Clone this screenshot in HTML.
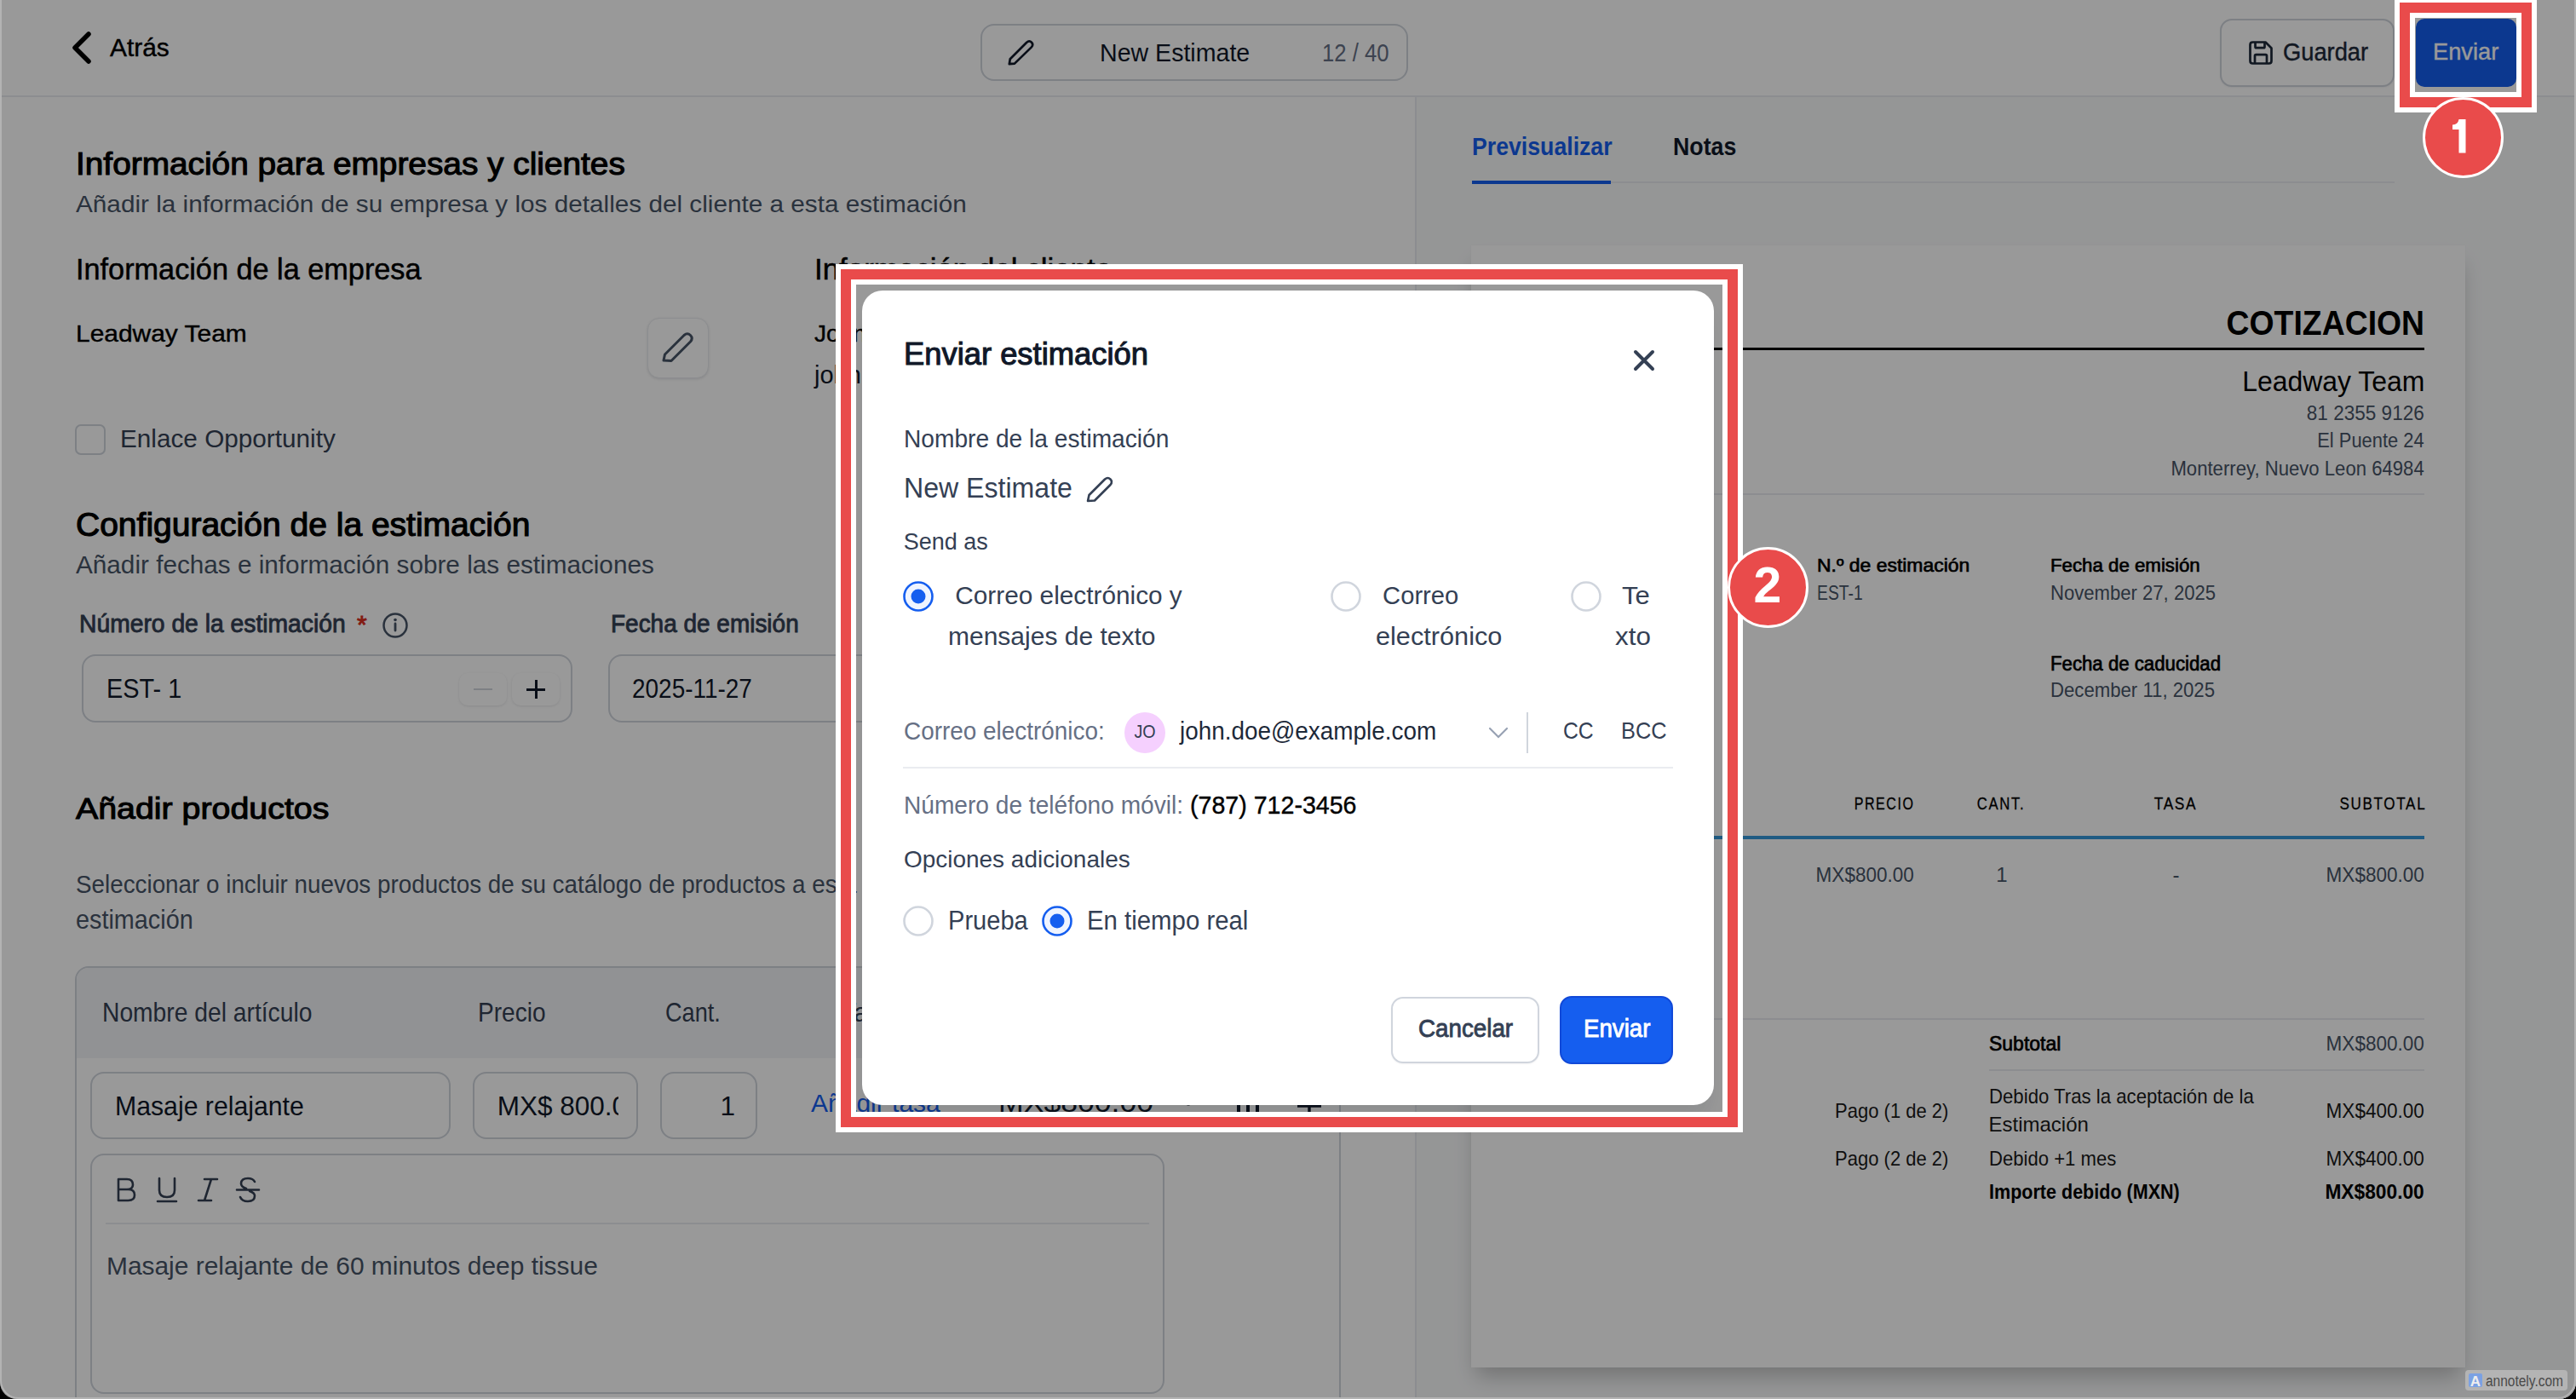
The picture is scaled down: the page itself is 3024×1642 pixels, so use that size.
<!DOCTYPE html>
<html><head><meta charset="utf-8"><style>
html,body{margin:0;padding:0;width:3024px;height:1642px;overflow:hidden;background:#000;}
body{position:relative;font-family:"Liberation Sans",sans-serif;}
#root{position:absolute;left:0;top:0;width:3024px;height:1642px;overflow:hidden;border-radius:0 0 20px 20px;}
.t{position:absolute;white-space:pre;}
.b{position:absolute;box-sizing:border-box;}
svg.b{overflow:visible;}
</style></head><body><div id="root">
<div class="b" style="left:0px;top:0px;width:3024px;height:1642px;background:#fff;"></div>
<div class="b" style="left:0px;top:112px;width:3024px;height:2px;background:#EAECF0;"></div>
<svg class="b" style="left:80px;top:32px;" width="32" height="48" viewBox="0 0 32 48"><polyline points="24,8 8,24 24,40" fill="none" stroke="#000" stroke-width="5.5" stroke-linecap="round" stroke-linejoin="round"/></svg>
<div id="t0" class="t" style="top:40.9px;font-size:29.5px;line-height:29.5px;font-weight:400;color:#000;-webkit-text-stroke:0.41px #000;left:129px;transform:scaleX(1.0136);transform-origin:left;">Atrás</div>
<div class="b" style="left:1151px;top:28px;width:502px;height:67px;border:2px solid #D0D5DD;border-radius:16px;box-sizing:border-box;"></div>
<svg class="b" style="left:1180px;top:44px;" width="36" height="36" viewBox="0 0 36 36"><path d="M4.8 31.2 L5.8 25.2 L25 6 Q28.3 3 31 5.7 Q33.6 8.4 30.6 11.6 L11 30.6 Z" fill="none" stroke="#101828" stroke-width="2.7" stroke-linejoin="round"/></svg>
<div id="t1" class="t" style="top:47.1px;font-size:29.5px;line-height:29.5px;font-weight:400;color:#101828;left:1290.5px;transform:scaleX(0.9683);transform-origin:left;">New Estimate</div>
<div id="t2" class="t" style="top:47.1px;font-size:29.5px;line-height:29.5px;font-weight:400;color:#667085;left:1552px;transform:scaleX(0.8706);transform-origin:left;">12 / 40</div>
<div class="b" style="left:2606px;top:22px;width:205px;height:80px;border:2px solid #D0D5DD;border-radius:14px;box-sizing:border-box;background:#fff;box-shadow:0 1px 2px rgba(16,24,40,.05);"></div>
<svg class="b" style="left:2638px;top:46px;" width="32" height="32" viewBox="0 0 32 32"><path d="M3.5 6.5 Q3.5 3.5 6.5 3.5 L21.5 3.5 L28.5 10.5 L28.5 25.5 Q28.5 28.5 25.5 28.5 L6.5 28.5 Q3.5 28.5 3.5 25.5 Z" fill="none" stroke="#1d2939" stroke-width="2.7" stroke-linejoin="round"/><path d="M9.5 3.5 L9.5 9 Q9.5 10.2 10.7 10.2 L19.3 10.2 Q20.5 10.2 20.5 9 L20.5 3.5" fill="none" stroke="#1d2939" stroke-width="2.7"/><path d="M9 28.5 L9 19.7 Q9 18.2 10.5 18.2 L21.5 18.2 Q23 18.2 23 19.7 L23 28.5" fill="none" stroke="#1d2939" stroke-width="2.7"/></svg>
<div id="t3" class="t" style="top:45.7px;font-size:30.0px;line-height:30.0px;font-weight:400;color:#1d2939;-webkit-text-stroke:0.42px #1d2939;left:2679.5px;transform:scaleX(0.9098);transform-origin:left;">Guardar</div>
<div class="b" style="left:2836px;top:22px;width:118px;height:80px;background:#155EEF;border-radius:10px;"></div>
<div id="t4" class="t" style="top:46.4px;font-size:28.5px;line-height:28.5px;font-weight:400;color:#fff;-webkit-text-stroke:0.40px #fff;left:2855.8px;transform:scaleX(0.9559);transform-origin:left;">Enviar</div>
<div class="b" style="left:1661px;top:114px;width:2px;height:1528px;background:#EAECF0;"></div>
<div id="t5" class="t" style="top:174.2px;font-size:37.0px;line-height:37.0px;font-weight:400;color:#000;-webkit-text-stroke:1.11px #000;left:89px;transform:scaleX(1.0487);transform-origin:left;">Información para empresas y clientes</div>
<div id="t6" class="t" style="top:225.6px;font-size:28.0px;line-height:28.0px;font-weight:400;color:#475467;left:89px;transform:scaleX(1.0615);transform-origin:left;">Añadir la información de su empresa y los detalles del cliente a esta estimación</div>
<div id="t7" class="t" style="top:298.2px;font-size:35.0px;line-height:35.0px;font-weight:400;color:#000;-webkit-text-stroke:0.49px #000;left:89px;transform:scaleX(0.9787);transform-origin:left;">Información de la empresa</div>
<div id="t8" class="t" style="top:298.2px;font-size:35.0px;line-height:35.0px;font-weight:400;color:#000;-webkit-text-stroke:0.49px #000;left:956px;transform:scaleX(0.9968);transform-origin:left;">Información del cliente</div>
<div id="t9" class="t" style="top:378.2px;font-size:28.0px;line-height:28.0px;font-weight:400;color:#000;-webkit-text-stroke:0.39px #000;left:89px;transform:scaleX(1.0690);transform-origin:left;">Leadway Team</div>
<div class="b" style="left:760px;top:373px;width:72px;height:71px;border:1px solid #EAECF0;border-radius:14px;background:#fff;box-shadow:0 1px 3px rgba(16,24,40,.12);box-sizing:border-box;"></div>
<svg class="b" style="left:776px;top:388px;" width="40" height="40" viewBox="0 0 40 40"><path d="M3 35 L4.5 28 L27 5.5 Q31 2 34.5 5.5 Q38 9 34.5 13 L12 35.5 Z" fill="none" stroke="#475467" stroke-width="3" stroke-linejoin="round"/></svg>
<div id="t10" class="t" style="top:378.2px;font-size:28.0px;line-height:28.0px;font-weight:400;color:#000;-webkit-text-stroke:0.39px #000;left:956px;">John Doe</div>
<div id="t11" class="t" style="top:426.4px;font-size:29.0px;line-height:29.0px;font-weight:400;color:#101828;left:956px;">john.doe@example.com</div>
<div class="b" style="left:88px;top:498px;width:36px;height:36px;border:2px solid #D0D5DD;border-radius:7px;box-sizing:border-box;background:#fff;"></div>
<div id="t12" class="t" style="top:500.2px;font-size:30.0px;line-height:30.0px;font-weight:400;color:#344054;left:141px;transform:scaleX(0.9907);transform-origin:left;">Enlace Opportunity</div>
<div id="t13" class="t" style="top:597.0px;font-size:38.0px;line-height:38.0px;font-weight:400;color:#000;-webkit-text-stroke:1.14px #000;left:89px;transform:scaleX(1.0264);transform-origin:left;">Configuración de la estimación</div>
<div id="t14" class="t" style="top:649.2px;font-size:29.0px;line-height:29.0px;font-weight:400;color:#475467;left:89px;transform:scaleX(1.0246);transform-origin:left;">Añadir fechas e información sobre las estimaciones</div>
<div id="t15" class="t" style="top:718.4px;font-size:29.0px;line-height:29.0px;font-weight:400;color:#344054;-webkit-text-stroke:0.87px #344054;left:93px;transform:scaleX(0.9748);transform-origin:left;">Número de la estimación</div>
<div id="t16" class="t" style="top:717.5px;font-size:30px;line-height:30px;font-weight:400;color:#D92D20;-webkit-text-stroke:0.90px #D92D20;left:419px;">*</div>
<svg class="b" style="left:447px;top:717px;" width="34" height="34" viewBox="0 0 34 34"><circle cx="17" cy="17" r="13.5" fill="none" stroke="#475467" stroke-width="2.5"/><line x1="17" y1="15" x2="17" y2="23" stroke="#475467" stroke-width="2.8" stroke-linecap="round"/><circle cx="17" cy="10.5" r="1.8" fill="#475467"/></svg>
<div id="t17" class="t" style="top:718.4px;font-size:29.0px;line-height:29.0px;font-weight:400;color:#344054;-webkit-text-stroke:0.87px #344054;left:717px;transform:scaleX(0.9641);transform-origin:left;">Fecha de emisión</div>
<div class="b" style="left:96px;top:768px;width:576px;height:80px;border:2px solid #D0D5DD;border-radius:16px;box-sizing:border-box;background:#fff;"></div>
<div id="t18" class="t" style="top:791.8px;font-size:32.0px;line-height:32.0px;font-weight:400;color:#101828;left:125px;transform:scaleX(0.9021);transform-origin:left;">EST- 1</div>
<div class="b" style="left:539px;top:790px;width:56px;height:38px;border-radius:10px;background:#fff;box-shadow:0 1px 3px rgba(16,24,40,.10);"></div>
<div class="b" style="left:556px;top:808px;width:22px;height:2px;background:#D0D5DD;"></div>
<div class="b" style="left:601px;top:790px;width:56px;height:38px;border-radius:10px;background:#fff;box-shadow:0 1px 3px rgba(16,24,40,.10);"></div>
<div class="b" style="left:618px;top:808px;width:22px;height:2.5px;background:#101828;"></div>
<div class="b" style="left:628px;top:798px;width:2.5px;height:22px;background:#101828;"></div>
<div class="b" style="left:714px;top:768px;width:686px;height:80px;border:2px solid #D0D5DD;border-radius:16px;box-sizing:border-box;background:#fff;"></div>
<div id="t19" class="t" style="top:791.8px;font-size:32.0px;line-height:32.0px;font-weight:400;color:#101828;left:741.8px;transform:scaleX(0.8733);transform-origin:left;">2025-11-27</div>
<div id="t20" class="t" style="top:931.2px;font-size:35.0px;line-height:35.0px;font-weight:400;color:#000;-webkit-text-stroke:1.05px #000;left:89px;transform:scaleX(1.1238);transform-origin:left;">Añadir productos</div>
<div id="t21" class="t" style="top:1023.1px;font-size:30.0px;line-height:30.0px;font-weight:400;color:#475467;left:89px;transform:scaleX(0.9270);transform-origin:left;">Seleccionar o incluir nuevos productos de su catálogo de productos a esta</div>
<div id="t22" class="t" style="top:1064.0px;font-size:30.5px;line-height:30.5px;font-weight:400;color:#475467;left:89px;transform:scaleX(0.9447);transform-origin:left;">estimación</div>
<div class="b" style="left:88px;top:1134px;width:1486px;height:548px;border:2px solid #D0D5DD;border-radius:16px;box-sizing:border-box;background:#fff;overflow:hidden;"></div>
<div class="b" style="left:90px;top:1136px;width:1482px;height:105.5px;background:#F2F4F7;border-radius:14px 14px 0 0;"></div>
<div id="t23" class="t" style="top:1172.7px;font-size:30.5px;line-height:30.5px;font-weight:400;color:#344054;left:120px;transform:scaleX(0.9257);transform-origin:left;">Nombre del artículo</div>
<div id="t24" class="t" style="top:1172.7px;font-size:30.5px;line-height:30.5px;font-weight:400;color:#344054;left:560.7px;transform:scaleX(0.9194);transform-origin:left;">Precio</div>
<div id="t25" class="t" style="top:1172.7px;font-size:30.5px;line-height:30.5px;font-weight:400;color:#344054;left:780.8px;transform:scaleX(0.8892);transform-origin:left;">Cant.</div>
<div id="t26" class="t" style="top:1172.7px;font-size:30.5px;line-height:30.5px;font-weight:400;color:#344054;left:987px;">Tasa</div>
<div class="b" style="left:106px;top:1258px;width:423px;height:79px;border:2px solid #D0D5DD;border-radius:16px;box-sizing:border-box;background:#fff;"></div>
<div id="t27" class="t" style="top:1282.8px;font-size:31.5px;line-height:31.5px;font-weight:400;color:#101828;left:134.8px;transform:scaleX(0.9596);transform-origin:left;">Masaje relajante</div>
<div class="b" style="left:555px;top:1258px;width:194px;height:79px;border:2px solid #D0D5DD;border-radius:16px;box-sizing:border-box;background:#fff;overflow:hidden;"></div>
<div class="b" style="left:583px;top:1270px;width:143px;height:60px;overflow:hidden;"><div class="t" style="left:0.7px;top:12.8px;font-size:31.5px;line-height:31.5px;color:#101828;">MX$ 800.00</div></div>
<div class="b" style="left:775px;top:1258px;width:114px;height:79px;border:2px solid #D0D5DD;border-radius:16px;box-sizing:border-box;background:#fff;"></div>
<div id="t28" class="t" style="top:1282.8px;font-size:31.5px;line-height:31.5px;font-weight:400;color:#101828;right:2161px;">1</div>
<div id="t29" class="t" style="top:1280.3px;font-size:30.0px;line-height:30.0px;font-weight:400;color:#155EEF;left:952px;">Añadir tasa</div>
<div id="t30" class="t" style="top:1279.0px;font-size:31.5px;line-height:31.5px;font-weight:400;color:#101828;left:1172px;transform:scaleX(1.1304);transform-origin:left;">MX$800.00</div>
<svg class="b" style="left:1385px;top:1265px;" width="20" height="40" viewBox="0 0 20 40"><circle cx="10" cy="6" r="2.6" fill="#101828"/><circle cx="10" cy="18" r="2.6" fill="#101828"/><circle cx="10" cy="30" r="2.6" fill="#101828"/></svg>
<svg class="b" style="left:1448px;top:1280px;" width="34" height="30" viewBox="0 0 34 30"><path d="M6 2 L6 28 M17 2 L17 28 M28 2 L28 28" stroke="#101828" stroke-width="4"/></svg>
<svg class="b" style="left:1520px;top:1282px;" width="34" height="34" viewBox="0 0 34 34"><path d="M17 3 L17 31 M3 16 L31 16" stroke="#101828" stroke-width="3.4"/></svg>
<div class="b" style="left:1106px;top:1355px;width:261px;height:281px;"></div>
<div class="b" style="left:106px;top:1354px;width:1261px;height:282px;border:2px solid #D0D5DD;border-radius:16px;box-sizing:border-box;background:#fff;"></div>
<svg class="b" style="left:130px;top:1378px;" width="36" height="36" viewBox="0 0 36 36"><path d="M9 6 L19 6 Q26 6 26 12.5 Q26 18 19 18 L9 18 Z M9 18 L20.5 18 Q28 18 28 24.5 Q28 31 20.5 31 L9 31 Z" fill="none" stroke="#344054" stroke-width="2.6" stroke-linejoin="round"/></svg>
<svg class="b" style="left:178px;top:1378px;" width="36" height="36" viewBox="0 0 36 36"><path d="M9 5 L9 19 Q9 27 18 27 Q27 27 27 19 L27 5 M7 32 L29 32" fill="none" stroke="#344054" stroke-width="2.6" stroke-linecap="round"/></svg>
<svg class="b" style="left:226px;top:1378px;" width="36" height="36" viewBox="0 0 36 36"><path d="M14 6 L29 6 M7 31 L22 31 M22 6 L14 31" fill="none" stroke="#344054" stroke-width="2.6" stroke-linecap="round"/></svg>
<svg class="b" style="left:273px;top:1378px;" width="36" height="36" viewBox="0 0 36 36"><path d="M26 9 Q24 5 18 5 Q10 5 10 11 Q10 15 16 17 M20 20 Q26 22 26 25.5 Q26 32 18 32 Q11 32 9 27 M5 18.5 L31 18.5" fill="none" stroke="#344054" stroke-width="2.6" stroke-linecap="round"/></svg>
<div class="b" style="left:124px;top:1435px;width:1225px;height:2px;background:#EAECF0;"></div>
<div id="t31" class="t" style="top:1470.9px;font-size:29.5px;line-height:29.5px;font-weight:400;color:#475467;left:125px;transform:scaleX(1.0136);transform-origin:left;">Masaje relajante de 60 minutos deep tissue</div>
<div class="b" style="left:1663px;top:114px;width:1361px;height:1528px;background:#F9FAFB;"></div>
<div id="t32" class="t" style="top:156.9px;font-size:29.5px;line-height:29.5px;font-weight:700;color:#155EEF;left:1728px;transform:scaleX(0.9042);transform-origin:left;">Previsualizar</div>
<div id="t33" class="t" style="top:156.9px;font-size:29.5px;line-height:29.5px;font-weight:700;color:#101828;left:1964px;transform:scaleX(0.9065);transform-origin:left;">Notas</div>
<div class="b" style="left:1728px;top:213px;width:1083px;height:2px;background:#EAECF0;"></div>
<div class="b" style="left:1728px;top:211.8px;width:163px;height:4.0px;background:#155EEF;"></div>
<div class="b" style="left:1727px;top:287.5px;width:1167px;height:1317.2px;background:#fff;box-shadow:0 16px 24px -6px rgba(0,0,0,.24), 0 0 1px rgba(0,0,0,.06);"></div>
<div id="t34" class="t" style="top:358.5px;font-size:41.0px;line-height:41.0px;font-weight:700;color:#000;right:178px;transform:scaleX(0.9116);transform-origin:right;">COTIZACION</div>
<div class="b" style="left:1774px;top:407.5px;width:1072px;height:3.0px;background:#000;"></div>
<div id="t35" class="t" style="top:431.4px;font-size:33.0px;line-height:33.0px;font-weight:400;color:#000;right:178px;transform:scaleX(0.9677);transform-origin:right;">Leadway Team</div>
<div id="t36" class="t" style="top:474.3px;font-size:23.5px;line-height:23.5px;font-weight:400;color:#475467;right:178px;transform:scaleX(0.9596);transform-origin:right;">81 2355 9126</div>
<div id="t37" class="t" style="top:506.3px;font-size:23.5px;line-height:23.5px;font-weight:400;color:#475467;right:178px;transform:scaleX(0.9312);transform-origin:right;">El Puente 24</div>
<div id="t38" class="t" style="top:538.7px;font-size:23.5px;line-height:23.5px;font-weight:400;color:#475467;right:178px;transform:scaleX(0.9417);transform-origin:right;">Monterrey, Nuevo Leon 64984</div>
<div class="b" style="left:1774px;top:579px;width:1072px;height:2px;background:#EAECF0;"></div>
<div id="t39" class="t" style="top:653.5px;font-size:21.5px;line-height:21.5px;font-weight:400;color:#000;-webkit-text-stroke:0.65px #000;left:1774px;">John Doe</div>
<div id="t40" class="t" style="top:653.5px;font-size:21.5px;line-height:21.5px;font-weight:400;color:#000;-webkit-text-stroke:0.65px #000;left:2132.5px;transform:scaleX(1.0678);transform-origin:left;">N.º de estimación</div>
<div id="t41" class="t" style="top:684.1px;font-size:24.0px;line-height:24.0px;font-weight:400;color:#475467;left:2132.5px;transform:scaleX(0.8044);transform-origin:left;">EST-1</div>
<div id="t42" class="t" style="top:653.5px;font-size:21.5px;line-height:21.5px;font-weight:400;color:#000;-webkit-text-stroke:0.65px #000;left:2407.3px;transform:scaleX(1.0350);transform-origin:left;">Fecha de emisión</div>
<div id="t43" class="t" style="top:684.1px;font-size:24.0px;line-height:24.0px;font-weight:400;color:#475467;left:2407.3px;transform:scaleX(0.9204);transform-origin:left;">November 27, 2025</div>
<div id="t44" class="t" style="top:767.5px;font-size:23.0px;line-height:23.0px;font-weight:400;color:#000;-webkit-text-stroke:0.69px #000;left:2407.3px;transform:scaleX(0.9656);transform-origin:left;">Fecha de caducidad</div>
<div id="t45" class="t" style="top:798.3px;font-size:24.0px;line-height:24.0px;font-weight:400;color:#475467;left:2407.3px;transform:scaleX(0.9235);transform-origin:left;">December 11, 2025</div>
<div id="t46" class="t" style="top:933.2px;font-size:20.5px;line-height:20.5px;font-weight:400;color:#000;-webkit-text-stroke:0.29px #000;right:778px;letter-spacing:2px;margin-right:-2px;transform:scaleX(0.7832);transform-origin:right;">PRECIO</div>
<div id="t47" class="t" style="top:933.2px;font-size:20.5px;line-height:20.5px;font-weight:400;color:#000;-webkit-text-stroke:0.29px #000;left:1749px;width:1200px;text-align:center;letter-spacing:2px;transform:scaleX(0.8161);transform-origin:center;">CANT.</div>
<div id="t48" class="t" style="top:933.2px;font-size:20.5px;line-height:20.5px;font-weight:400;color:#000;-webkit-text-stroke:0.29px #000;left:1954.3000000000002px;width:1200px;text-align:center;letter-spacing:2px;transform:scaleX(0.8418);transform-origin:center;">TASA</div>
<div id="t49" class="t" style="top:933.2px;font-size:20.5px;line-height:20.5px;font-weight:400;color:#000;-webkit-text-stroke:0.29px #000;right:178px;letter-spacing:2px;margin-right:-2px;transform:scaleX(0.8324);transform-origin:right;">SUBTOTAL</div>
<div class="b" style="left:1774px;top:981px;width:1072px;height:3.5px;background:#3498DB;"></div>
<div id="t50" class="t" style="top:1015.3px;font-size:24.0px;line-height:24.0px;font-weight:400;color:#475467;right:777.6999999999998px;transform:scaleX(0.9380);transform-origin:right;">MX$800.00</div>
<div id="t51" class="t" style="top:1015.3px;font-size:24.0px;line-height:24.0px;font-weight:400;color:#475467;left:1750px;width:1200px;text-align:center;">1</div>
<div id="t52" class="t" style="top:1015.3px;font-size:24.0px;line-height:24.0px;font-weight:400;color:#475467;left:1954.5px;width:1200px;text-align:center;">-</div>
<div id="t53" class="t" style="top:1015.3px;font-size:24.0px;line-height:24.0px;font-weight:400;color:#475467;right:178px;transform:scaleX(0.9380);transform-origin:right;">MX$800.00</div>
<div class="b" style="left:1774px;top:1195px;width:1072px;height:2px;background:#EAECF0;"></div>
<div id="t54" class="t" style="top:1213.2px;font-size:24.0px;line-height:24.0px;font-weight:400;color:#000;-webkit-text-stroke:0.72px #000;left:2334.5px;transform:scaleX(0.9580);transform-origin:left;">Subtotal</div>
<div id="t55" class="t" style="top:1213.2px;font-size:24.0px;line-height:24.0px;font-weight:400;color:#475467;right:178px;transform:scaleX(0.9380);transform-origin:right;">MX$800.00</div>
<div class="b" style="left:2334.5px;top:1255px;width:511.5px;height:2px;background:#EAECF0;"></div>
<div id="t56" class="t" style="top:1274.9px;font-size:24.0px;line-height:24.0px;font-weight:400;color:#1a1a1a;left:2334.5px;transform:scaleX(0.9245);transform-origin:left;">Debido Tras la aceptación de la</div>
<div id="t57" class="t" style="top:1307.6px;font-size:24.0px;line-height:24.0px;font-weight:400;color:#1a1a1a;left:2334.5px;">Estimación</div>
<div id="t58" class="t" style="top:1291.6px;font-size:24.0px;line-height:24.0px;font-weight:400;color:#1a1a1a;right:737px;transform:scaleX(0.9167);transform-origin:right;">Pago (1 de 2)</div>
<div id="t59" class="t" style="top:1291.6px;font-size:24.0px;line-height:24.0px;font-weight:400;color:#1a1a1a;right:178px;transform:scaleX(0.9380);transform-origin:right;">MX$400.00</div>
<div id="t60" class="t" style="top:1347.6px;font-size:24.0px;line-height:24.0px;font-weight:400;color:#1a1a1a;right:737px;transform:scaleX(0.9167);transform-origin:right;">Pago (2 de 2)</div>
<div id="t61" class="t" style="top:1347.6px;font-size:24.0px;line-height:24.0px;font-weight:400;color:#1a1a1a;left:2334.5px;transform:scaleX(0.9212);transform-origin:left;">Debido +1 mes</div>
<div id="t62" class="t" style="top:1347.6px;font-size:24.0px;line-height:24.0px;font-weight:400;color:#1a1a1a;right:178px;transform:scaleX(0.9380);transform-origin:right;">MX$400.00</div>
<div id="t63" class="t" style="top:1387.4px;font-size:24.0px;line-height:24.0px;font-weight:700;color:#000;left:2334.5px;transform:scaleX(0.8976);transform-origin:left;">Importe debido (MXN)</div>
<div id="t64" class="t" style="top:1387.4px;font-size:24.0px;line-height:24.0px;font-weight:700;color:#000;right:178px;transform:scaleX(0.9479);transform-origin:right;">MX$800.00</div>
<div class="b" style="left:0px;top:0px;width:3024px;height:1642px;background:rgba(0,0,0,.4);"></div>
<div class="b" style="left:0px;top:-10px;width:3024px;height:1652px;border:2px solid #b3b3b3;border-radius:0 0 22px 22px;"></div>
<div class="b" style="left:1012px;top:341px;width:1000px;height:956px;background:#fff;border-radius:24px;box-shadow:0 20px 24px -4px rgba(16,24,40,.08);"></div>
<div id="t65" class="t" style="top:398.1px;font-size:36.0px;line-height:36.0px;font-weight:400;color:#101828;-webkit-text-stroke:1.08px #101828;left:1061px;transform:scaleX(1.0099);transform-origin:left;">Enviar estimación</div>
<svg class="b" style="left:1914px;top:407px;" width="32" height="32" viewBox="0 0 32 32"><path d="M6 6 L26 26 M26 6 L6 26" stroke="#344054" stroke-width="4" stroke-linecap="round"/></svg>
<div id="t66" class="t" style="top:500.9px;font-size:29.0px;line-height:29.0px;font-weight:400;color:#344054;left:1061px;transform:scaleX(0.9709);transform-origin:left;">Nombre de la estimación</div>
<div id="t67" class="t" style="top:555.7px;font-size:33.0px;line-height:33.0px;font-weight:400;color:#344054;left:1061px;transform:scaleX(0.9723);transform-origin:left;">New Estimate</div>
<svg class="b" style="left:1272px;top:556px;" width="36" height="36" viewBox="0 0 36 36"><path d="M5 32 L6.5 25 L25 6.5 Q28.5 3.5 31.5 6.5 Q34.5 9.5 31.5 13 L13 31.5 Z" fill="none" stroke="#344054" stroke-width="2.6" stroke-linejoin="round"/></svg>
<div id="t68" class="t" style="top:622.8px;font-size:27.0px;line-height:27.0px;font-weight:400;color:#344054;left:1060.75px;">Send as</div>
<svg class="b" style="left:1059px;top:681px;" width="38" height="38" viewBox="0 0 38 38"><circle cx="19" cy="19" r="16.5" fill="#EFF4FF" stroke="#155EEF" stroke-width="2.6"/><circle cx="19" cy="19" r="8.5" fill="#155EEF"/></svg>
<div id="t69" class="t" style="top:684.0px;font-size:30.0px;line-height:30.0px;font-weight:400;color:#344054;left:1113px;transform:scaleX(0.9927);transform-origin:left;"> Correo electrónico y</div>
<div id="t70" class="t" style="top:732.0px;font-size:30.0px;line-height:30.0px;font-weight:400;color:#344054;left:1113px;">mensajes de texto</div>
<svg class="b" style="left:1561px;top:681px;" width="38" height="38" viewBox="0 0 38 38"><circle cx="19" cy="19" r="16.5" fill="#fff" stroke="#D0D5DD" stroke-width="2.6"/></svg>
<div id="t71" class="t" style="top:684.0px;font-size:30.0px;line-height:30.0px;font-weight:400;color:#344054;left:1614.5px;transform:scaleX(0.9720);transform-origin:left;"> Correo</div>
<div id="t72" class="t" style="top:732.0px;font-size:30.0px;line-height:30.0px;font-weight:400;color:#344054;left:1614.5px;transform:scaleX(1.0225);transform-origin:left;">electrónico</div>
<svg class="b" style="left:1843px;top:681px;" width="38" height="38" viewBox="0 0 38 38"><circle cx="19" cy="19" r="16.5" fill="#fff" stroke="#D0D5DD" stroke-width="2.6"/></svg>
<div id="t73" class="t" style="top:684.0px;font-size:30.0px;line-height:30.0px;font-weight:400;color:#344054;left:1896px;transform:scaleX(1.0349);transform-origin:left;"> Te</div>
<div id="t74" class="t" style="top:732.0px;font-size:30.0px;line-height:30.0px;font-weight:400;color:#344054;left:1896px;transform:scaleX(1.0463);transform-origin:left;">xto</div>
<div id="t75" class="t" style="top:844.1px;font-size:29.0px;line-height:29.0px;font-weight:400;color:#667085;left:1061px;transform:scaleX(0.9619);transform-origin:left;">Correo electrónico:</div>
<div class="b" style="left:1320px;top:836px;width:48px;height:48px;background:#F5D0FE;border-radius:50%;"></div>
<div id="t76" class="t" style="top:848.7px;font-size:21.5px;line-height:21.5px;font-weight:400;color:#344054;left:744px;width:1200px;text-align:center;transform:scaleX(0.9162);transform-origin:center;">JO</div>
<div id="t77" class="t" style="top:844.1px;font-size:29.0px;line-height:29.0px;font-weight:400;color:#1d2939;left:1384.5px;transform:scaleX(0.9617);transform-origin:left;">john.doe@example.com</div>
<svg class="b" style="left:1744px;top:850px;" width="30" height="20" viewBox="0 0 30 20"><polyline points="5,5 15,15 25,5" fill="none" stroke="#98A2B3" stroke-width="2.2" stroke-linecap="round"/></svg>
<div class="b" style="left:1791.5px;top:836px;width:2.0px;height:48px;background:#D0D5DD;"></div>
<div id="t78" class="t" style="top:842.8px;font-size:28.5px;line-height:28.5px;font-weight:400;color:#344054;left:1834.5px;transform:scaleX(0.8679);transform-origin:left;">CC</div>
<div id="t79" class="t" style="top:842.8px;font-size:28.5px;line-height:28.5px;font-weight:400;color:#344054;left:1903px;transform:scaleX(0.8892);transform-origin:left;">BCC</div>
<div class="b" style="left:1060px;top:900px;width:904px;height:2px;background:#EAECF0;"></div>
<div id="t80" class="t" style="top:930.2px;font-size:29.5px;line-height:29.5px;font-weight:400;color:#667085;left:1061px;transform:scaleX(0.9528);transform-origin:left;">Número de teléfono móvil:</div>
<div id="t81" class="t" style="top:930.2px;font-size:29.5px;line-height:29.5px;font-weight:400;color:#000;-webkit-text-stroke:0.41px #000;left:1396.8px;transform:scaleX(0.9692);transform-origin:left;">(787) 712-3456</div>
<div id="t82" class="t" style="top:995.0px;font-size:27.5px;line-height:27.5px;font-weight:400;color:#344054;left:1061px;transform:scaleX(1.0163);transform-origin:left;">Opciones adicionales</div>
<svg class="b" style="left:1059px;top:1062px;" width="38" height="38" viewBox="0 0 38 38"><circle cx="19" cy="19" r="16.5" fill="#fff" stroke="#D0D5DD" stroke-width="2.6"/></svg>
<div id="t83" class="t" style="top:1064.9px;font-size:31.0px;line-height:31.0px;font-weight:400;color:#344054;left:1113.4px;transform:scaleX(0.9377);transform-origin:left;">Prueba</div>
<svg class="b" style="left:1222px;top:1062px;" width="38" height="38" viewBox="0 0 38 38"><circle cx="19" cy="19" r="16.5" fill="#EFF4FF" stroke="#155EEF" stroke-width="2.6"/><circle cx="19" cy="19" r="8.5" fill="#155EEF"/></svg>
<div id="t84" class="t" style="top:1064.9px;font-size:31.0px;line-height:31.0px;font-weight:400;color:#344054;left:1276.4px;transform:scaleX(0.9473);transform-origin:left;">En tiempo real</div>
<div class="b" style="left:1632.5px;top:1169.5px;width:174.0px;height:78.5px;border:2px solid #D0D5DD;border-radius:14px;box-sizing:border-box;background:#fff;box-shadow:0 1px 2px rgba(16,24,40,.05);"></div>
<div id="t85" class="t" style="top:1193.3px;font-size:29.0px;line-height:29.0px;font-weight:400;color:#344054;-webkit-text-stroke:0.87px #344054;left:1664.6px;transform:scaleX(0.9569);transform-origin:left;">Cancelar</div>
<div class="b" style="left:1831px;top:1169px;width:133px;height:79.59999999999991px;background:#155EEF;border:2px solid #1149D8;border-radius:14px;box-sizing:border-box;"></div>
<div id="t86" class="t" style="top:1193.3px;font-size:29.0px;line-height:29.0px;font-weight:400;color:#fff;-webkit-text-stroke:0.87px #fff;left:1859px;transform:scaleX(0.9532);transform-origin:left;">Enviar</div>
<div class="b" style="left:981px;top:310px;width:1065px;height:1019px;border:6px solid #fff;box-sizing:border-box;"></div>
<div class="b" style="left:987px;top:316px;width:1053px;height:1007px;border:12px solid #E94B4B;box-sizing:border-box;"></div>
<div class="b" style="left:999px;top:328px;width:1029px;height:983px;border:6px solid #fff;box-sizing:border-box;"></div>
<div class="b" style="left:2811px;top:-3px;width:167px;height:134.6px;border:6px solid #fff;box-sizing:border-box;"></div>
<div class="b" style="left:2817px;top:3px;width:155px;height:122.6px;border:12px solid #E94B4B;box-sizing:border-box;"></div>
<div class="b" style="left:2829px;top:15px;width:131px;height:98.6px;border:6px solid #fff;box-sizing:border-box;"></div>
<div class="b" style="left:2843.5px;top:113.5px;width:95.0px;height:95.0px;background:#E94B4B;border:3.5px solid #fff;border-radius:50%;box-sizing:border-box;"></div>
<svg class="b" style="left:2871px;top:136px;" width="40" height="50" viewBox="0 0 40 50"><path d="M15.5 4 L23.5 4 L23.5 43.5 L15.5 43.5 L15.5 16 L8 16 L8 10.5 Q14.5 10 15.5 4 Z" fill="#fff"/></svg>
<div class="b" style="left:2027.5px;top:641.5px;width:95.0px;height:95.0px;background:#E94B4B;border:3.5px solid #fff;border-radius:50%;box-sizing:border-box;"></div>
<div id="t87" class="t" style="top:657.9px;font-size:59px;line-height:59px;font-weight:700;color:#fff;left:1475px;width:1200px;text-align:center;">2</div>
<div class="b" style="left:2894px;top:1608px;width:120px;height:24px;background:#b4b4b4;border-radius:4px;"></div>
<div class="b" style="left:2898px;top:1612px;width:16px;height:16px;background:#7ba1e3;border-radius:2px;"></div>
<div id="t88" class="t" style="top:1612.5px;font-size:17px;line-height:17px;font-weight:700;color:#eee;left:2306px;width:1200px;text-align:center;">A</div>
<div id="t89" class="t" style="top:1611.7px;font-size:18px;line-height:18px;font-weight:400;color:#4a4a4a;left:2918px;transform:scaleX(0.8600);transform-origin:left;">annotely.com</div>
</div></body></html>
